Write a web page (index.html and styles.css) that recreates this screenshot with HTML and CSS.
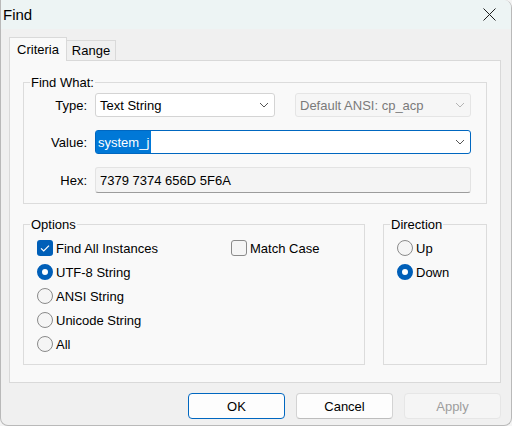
FILE: index.html
```html
<!DOCTYPE html>
<html lang="en">
<head>
<meta charset="utf-8">
<title>Find</title>
<link rel="stylesheet" href="styles.css">
</head>
<body>
<div class="window">
  <div class="titlebar">
    <span class="title">Find</span>
    <span class="close" aria-label="Close">
      <svg width="13" height="13" viewBox="0 0 13 13"><path d="M0.5 0.5 L12.5 12.5 M12.5 0.5 L0.5 12.5" stroke="#1c1c1c" stroke-width="1" fill="none"/></svg>
    </span>
  </div>
  <div class="content">
    <div class="tabs">
      <div class="tab active">Criteria</div>
      <div class="tab range">Range</div>
    </div>
    <div class="panel">
      <fieldset class="group findwhat">
        <legend>Find What:</legend>
        <div class="fw-body">
          <div class="row">
            <span class="lbl">Type:</span>
            <div class="combo type"><span>Text String</span><svg class="chev" width="10" height="6" viewBox="0 0 10 6"><polyline points="1,1 5,5 9,1" fill="none" stroke="#555" stroke-width="1"/></svg></div>
            <div class="combo ansi"><span>Default ANSI: cp_acp</span><svg class="chev" width="10" height="6" viewBox="0 0 10 6"><polyline points="1,1 5,5 9,1" fill="none" stroke="#b4b4b4" stroke-width="1"/></svg></div>
          </div>
          <div class="row">
            <span class="lbl">Value:</span>
            <div class="combo value"><span class="sel">system_j</span><svg class="chev" width="10" height="6" viewBox="0 0 10 6"><polyline points="1,1 5,5 9,1" fill="none" stroke="#555" stroke-width="1"/></svg></div>
          </div>
          <div class="row">
            <span class="lbl">Hex:</span>
            <div class="hexbox">7379 7374 656D 5F6A</div>
          </div>
        </div>
      </fieldset>
      <div class="groups-row">
        <fieldset class="group options">
          <legend>Options</legend>
          <div class="opt-body">
            <div class="col col1">
              <div class="item"><svg class="box" width="16" height="16" viewBox="0 0 16 16"><rect x="0" y="0" width="16" height="16" rx="3" fill="#005fb8"/><path d="M4 8.4 L6.7 11 L12 5.6" fill="none" stroke="#fff" stroke-width="1.2"/></svg><span>Find All Instances</span></div>
              <div class="item"><span class="radio on"></span><span>UTF-8 String</span></div>
              <div class="item"><span class="radio"></span><span>ANSI String</span></div>
              <div class="item"><span class="radio"></span><span>Unicode String</span></div>
              <div class="item"><span class="radio"></span><span>All</span></div>
            </div>
            <div class="col col2">
              <div class="item"><span class="check"></span><span>Match Case</span></div>
            </div>
          </div>
        </fieldset>
        <fieldset class="group direction">
          <legend>Direction</legend>
          <div class="dir-body">
            <div class="item"><span class="radio"></span><span>Up</span></div>
            <div class="item"><span class="radio on"></span><span>Down</span></div>
          </div>
        </fieldset>
      </div>
    </div>
    <div class="buttons">
      <button class="btn default">OK</button>
      <button class="btn">Cancel</button>
      <button class="btn disabled">Apply</button>
    </div>
  </div>
</div>
</body>
</html>
```
FILE: styles.css
```css
* { box-sizing: border-box; }
html, body { margin: 0; padding: 0; }
body {
  width: 512px;
  height: 426px;
  overflow: hidden;
  background: #f4f4f4;
  font-family: "Liberation Sans", Arial, sans-serif;
  font-size: 13px;
  line-height: 15px;
  color: #000;
}
.window {
  width: 512px;
  height: 426px;
  background: #f0f0f0;
  border: 1px solid #b9b9b9;
  border-top: none;
  border-radius: 0 8px 8px 8px;
  overflow: hidden;
  display: flex;
  flex-direction: column;
}
.titlebar {
  height: 29px;
  flex: none;
  background: #edf4f4;
  display: flex;
  align-items: center;
  justify-content: space-between;
  padding: 0 15px 0 2px;
}
.title {
  font-size: 15px;
  line-height: 18px;
  color: #000;
}
.close { display: flex; margin-top: -1px; }
.content {
  padding: 8px 10px 0 8px;
}
.tabs {
  display: flex;
  align-items: flex-end;
  height: 24px;
  margin-bottom: -1px;
  position: relative;
  z-index: 1;
}
.tab {
  height: 20px;
  margin-bottom: 1px;
  border: 1px solid #d9d9d9;
  border-bottom: none;
  background: #f0f0f0;
  text-align: center;
  padding-top: 2px;
}
.tab.active {
  width: 58px;
  height: 24px;
  margin-bottom: 0;
  background: #f9f9f9;
  padding-top: 4px;
}
.tab.range {
  width: 50px;
  margin-left: -1px;
}
.panel {
  border: 1px solid #d9d9d9;
  background: #f9f9f9;
  padding: 14px 13px 17px 13px;
}
.group {
  margin: 0;
  padding: 0;
  border: 1px solid #dcdcdc;
  min-width: 0;
}
.group legend {
  margin-left: 6px;
  padding: 0 1px;
  line-height: 15px;
}
.fw-body {
  padding: 3px 15px 10px 0;
  display: flex;
  flex-direction: column;
  gap: 13px;
}
.row {
  display: flex;
  align-items: center;
  gap: 8px;
}
.lbl {
  width: 63px;
  flex: none;
  text-align: right;
}
.combo {
  height: 24px;
  display: flex;
  align-items: center;
  justify-content: space-between;
  border: 1px solid #d4d4d4;
  border-radius: 3px;
  background: #fff;
  padding: 0 5px 0 4px;
}
.combo.type { width: 180px; }
.combo.ansi {
  width: 176px;
  margin-left: 12px;
  background: #f6f6f6;
  border-color: #e5e5e5;
  color: #7a7a7a;
}
.combo.value {
  width: 376px;
  border-color: #0067c0;
  padding-left: 0;
  align-items: stretch;
}
.combo.value .chev { align-self: center; }
.sel {
  background: #0078d7;
  color: #fff;
  padding: 0 2px 0 2px;
  display: flex;
  align-items: center;
}
.hexbox {
  width: 376px;
  height: 26px;
  border: 1px solid #e3e3e3;
  border-bottom-color: #9c9c9c;
  border-radius: 3px;
  background: #f4f4f4;
  padding: 0 4px;
  display: flex;
  align-items: center;
}
.groups-row {
  display: flex;
  gap: 18px;
  margin-top: 13px;
}
.group.options { width: 342px; flex: none; }
.group.direction { flex: 1; }
.opt-body {
  display: flex;
  padding: 4px 13px 8px 13px;
}
.col { display: flex; flex-direction: column; }
.col1 { width: 194px; flex: none; }
.dir-body {
  display: flex;
  flex-direction: column;
  padding: 4px 13px 8px 13px;
}
.item {
  height: 24px;
  display: flex;
  align-items: center;
  gap: 3px;
}
.box { flex: none; display: block; }
.check {
  width: 16px;
  height: 16px;
  flex: none;
  border: 1px solid #8a8a8a;
  border-radius: 3px;
  background: #f5f5f5;
}
.radio {
  width: 16px;
  height: 16px;
  flex: none;
  border: 1px solid #8a8a8a;
  border-radius: 50%;
  background: #f5f5f5;
}
.radio.on {
  border: 5px solid #005fb8;
  background: #fff;
}
.buttons {
  display: flex;
  justify-content: flex-end;
  gap: 11px;
  margin-top: 10px;
}
.btn {
  width: 97px;
  height: 26px;
  font-family: inherit;
  font-size: 13px;
  line-height: 15px;
  color: #000;
  background: #fdfdfd;
  border: 1px solid #d3d3d3;
  border-bottom-color: #bdbdbd;
  border-radius: 4px;
  padding: 0;
}
.btn.default {
  border-color: #0067c0;
}
.btn.disabled {
  background: #f5f5f5;
  border-color: #e6e6e6;
  color: #9d9d9d;
}
```
